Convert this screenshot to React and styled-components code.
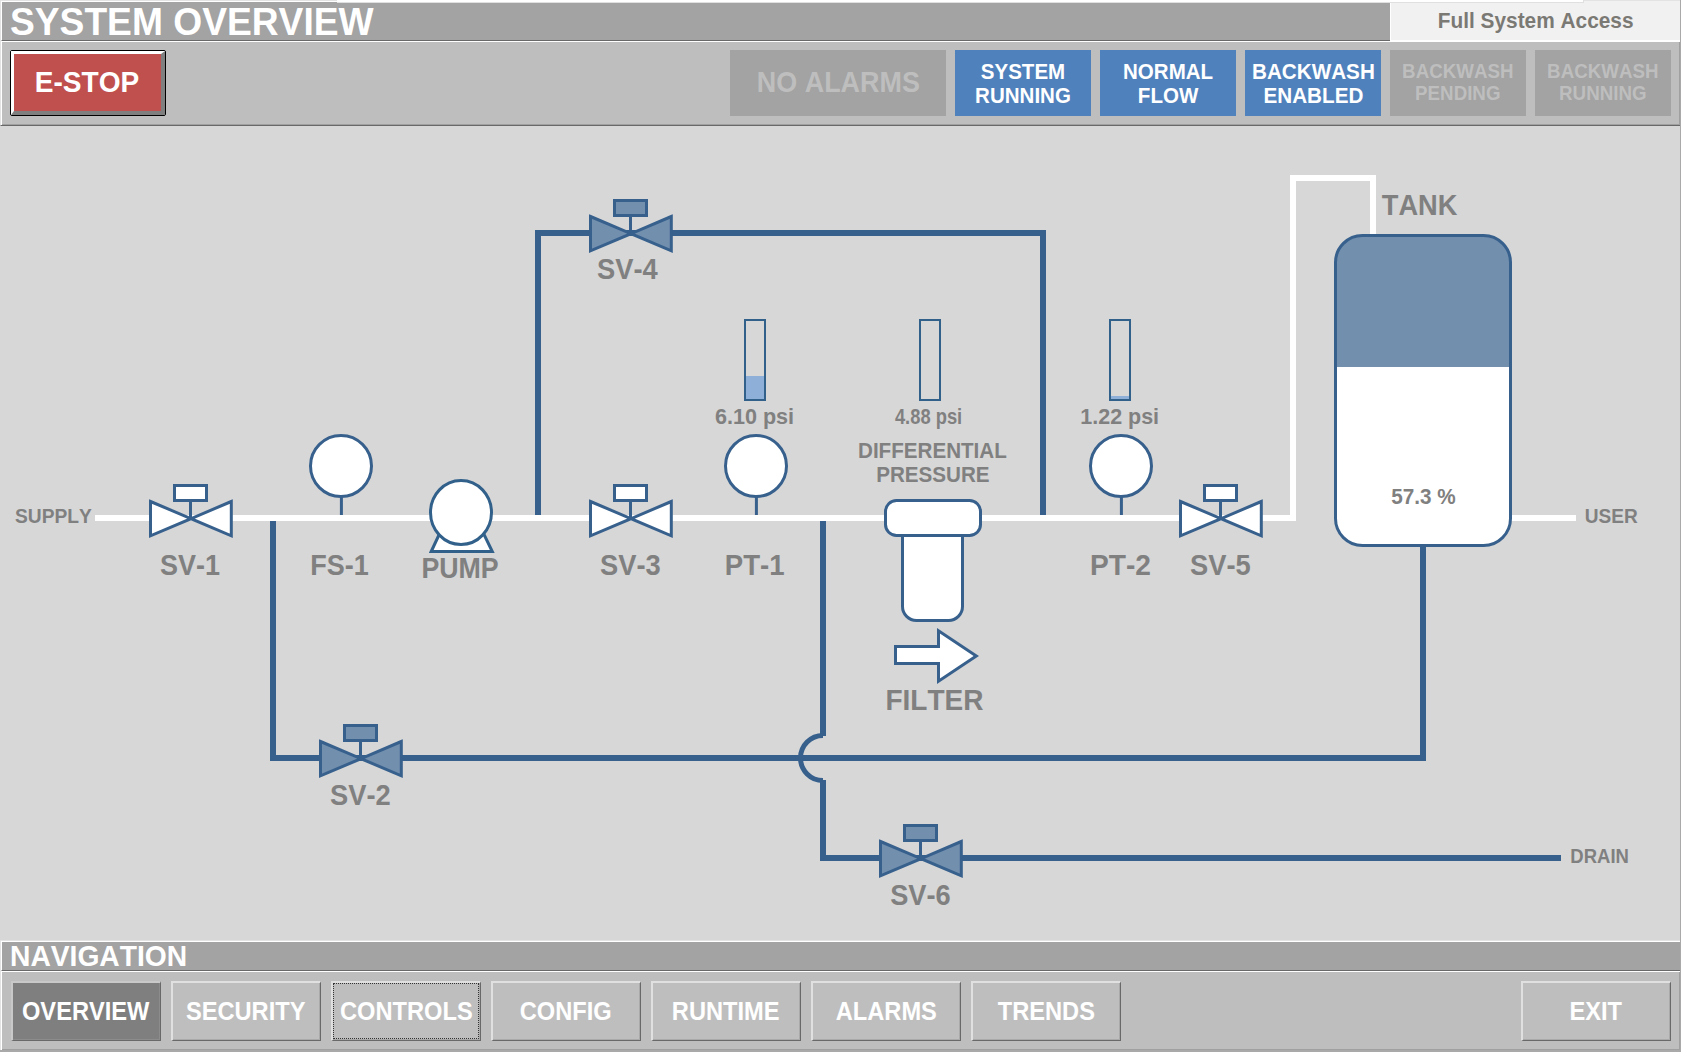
import React from 'react';
import styled, { createGlobalStyle, css } from 'styled-components';

const color = {
  canvas: '#d7d7d7',
  bar: '#bebebe',
  title: '#a3a3a3',
  pipe: '#37608d',
  gauge: '#31608a',
  closed: '#728fae',
  level: '#8eb0d8',
  label: '#808080',
  blue: '#4f81bd',
  red: '#c0504d',
  shadow: '#696969',
  shade: '#a0a0a0',
  light: '#e3e3e3',
};

const GlobalStyle = createGlobalStyle`
  *, *::before, *::after { box-sizing: border-box; }
  body {
    margin: 0;
    background: ${color.canvas};
    font-family: "Liberation Sans", Arial, sans-serif;
    font-weight: bold;
    font-kerning: none;
  }
`;

const Screen = styled.div`
  position: relative;
  display: flex;
  flex-direction: column;
  width: 1681px;
  height: 1052px;
  background: ${color.canvas};
  border-right: 1px solid #a9a9a9;
  border-bottom: 2px solid #a9a9a9;
  overflow: hidden;
`;

/* Slightly taller, narrower lettering used on every bar and button. */
const Caption = styled.span`
  display: inline-block;
  transform: scale(${(p) => p.$narrow || 0.985}, 1.04);
  transform-origin: ${(p) => (p.$start ? 'left' : 'center')} center;
`;

const TitleRow = styled.header`
  display: flex;
  flex: none;
  height: ${(p) => p.$height}px;
  border-left: 1px solid ${color.light};
  border-top: 1px solid ${color.light};
`;

const TitleBar = styled.h1`
  flex: 1;
  margin: 0;
  padding-left: ${(p) => p.$indent}px;
  background: ${color.title};
  border-left: 1px solid #fff;
  border-top: 1px solid #fff;
  border-bottom: 1px solid ${color.shadow};
  color: #fff;
  font-size: ${(p) => p.$size}px;
  line-height: ${(p) => p.$line}px;
  white-space: nowrap;
`;

const AccessLevel = styled.div`
  flex: none;
  width: 290px;
  background: #f1f1f1;
  border: solid #fff;
  border-width: 0 0 1px 1px;
  color: #7b7974;
  font-size: 21px;
  line-height: 39px;
  text-align: center;
`;

const WindowEdge = styled.div`
  position: absolute;
  top: 0;
  left: 337px;
  width: 1247px;
  height: 3px;
  background: #fff;
  border: solid #e0e0e0;
  border-width: 0 1px 1px 0;
`;

const Toolbar = styled.div`
  display: flex;
  flex: none;
  gap: ${(p) => p.$gap}px;
  height: ${(p) => p.$height}px;
  padding: ${(p) => p.$padding};
  background: ${color.bar};
  border-left: 1px solid ${color.light};
  box-shadow: inset 1px 1px 0 #fff, inset -1px -1px 0 ${color.shade};
`;

const StatusToolbar = styled(Toolbar)`
  border-bottom: 1px solid ${color.shadow};
`;

const Spacer = styled.div`
  flex: 1;
`;

const StopButton = styled.button`
  width: 156px;
  height: 66px;
  padding: 0;
  border: 1px solid #000;
  border-radius: 2px;
  background: #000;
`;

const StopFace = styled.span`
  display: block;
  height: 64px;
  background: ${color.red};
  border-style: solid;
  border-width: 3px 4px 4px 3px;
  border-color: #fff #7f7f7f #7f7f7f #fff;
  color: #fff;
  font: bold 28.5px/56px "Liberation Sans", Arial, sans-serif;
  font-kerning: none;
  text-align: center;
`;

const Status = styled.div`
  display: flex;
  align-items: center;
  justify-content: center;
  width: ${(p) => (p.$wide ? 216 : 136)}px;
  height: 66px;
  text-align: center;
  white-space: pre;
  ${(p) =>
    p.$active
      ? css`
          background: ${color.blue};
          color: #fff;
          font-size: 21px;
          line-height: 23px;
        `
      : css`
          background: ${color.title};
          color: #bebebe;
          font-size: ${p.$wide ? 28.2 : 19.8}px;
          line-height: 21.2px;
          padding-bottom: ${p.$wide ? 0 : 2}px;
        `}
`;

const Process = styled.main`
  flex: none;
  height: 814px;
`;

const Diagram = styled.svg`
  display: block;
`;

const Pipe = styled.path`
  fill: none;
  stroke: ${(p) => (p.$flow ? '#fff' : color.pipe)};
  stroke-width: ${(p) => p.$width || 6};
`;

const Shape = styled.g`
  stroke: ${color.pipe};
  stroke-width: 3;
  fill: ${(p) => (p.$closed ? color.closed : '#fff')};
`;

const Tag = styled.text`
  fill: ${color.label};
  font-size: ${(p) => p.$size}px;
`;

const NavButton = styled.button`
  position: relative;
  width: 150px;
  height: 60px;
  padding: 0 1px 0 0;
  background: ${(p) => (p.$current ? '#7f7f7f' : color.bar)};
  border: solid;
  border-width: 2px 1px 1px 2px;
  border-color: ${(p) => (p.$current ? '#c9c9c9' : '#e0e0e0')} ${color.shadow} ${color.shadow}
    ${(p) => (p.$current ? '#c9c9c9' : '#e0e0e0')};
  box-shadow: inset -1px -1px 0 ${(p) => (p.$current ? '#8c8c8c' : '#a9a9a9')};
  color: #fff;
  font: bold 24px/57px "Liberation Sans", Arial, sans-serif;
  font-kerning: none;
  text-align: center;

  ${(p) =>
    p.$focused &&
    css`
      &::after {
        content: '';
        position: absolute;
        inset: 0 1px 1px 0;
        border: 1px dotted #333;
      }
    `}
`;

function Label({ x, y, width, size = 29, children }) {
  return (
    <Tag x={x} y={y} $size={size} textLength={width} lengthAdjust="spacingAndGlyphs">
      {children}
    </Tag>
  );
}

function Valve({ x, y, closed }) {
  return (
    <Shape $closed={closed} transform={`translate(${x} ${y})`}>
      <path d="M-.5 -16V0" />
      <rect x="-16.5" y="-32.5" width="32" height="15" />
      <path d="M-40.5 -16.5L0 .7L-40.5 17.8Z" />
      <path d="M40.3 -16.5L0 .7L40.3 17.8Z" />
    </Shape>
  );
}

function Sensor({ x }) {
  return (
    <Shape transform={`translate(${x} 466)`}>
      <path d="M.4 31V49" />
      <circle r="30.5" />
    </Shape>
  );
}

function Bar({ x, level }) {
  return (
    <g>
      <rect x={x + 1} y="320" width="20" height="80" fill="none" stroke={color.gauge} strokeWidth="2" />
      {level > 0 && <rect x={x + 2} y={399 - level} width="18" height={level} fill={color.level} />}
    </g>
  );
}

function Pump() {
  return (
    <Shape>
      <path d="M431.2 551.5L445 522H478L492.3 551.5Z" stroke={color.gauge} />
      <ellipse cx="461" cy="512.5" rx="30.5" ry="32" stroke={color.gauge} />
    </Shape>
  );
}

function Filter() {
  return (
    <Shape>
      <rect x="902.5" y="520" width="60" height="100.5" rx="14" />
      <rect x="885.5" y="500.5" width="95" height="35" rx="11" />
      <path d="M895.5 646.5H938.5V630.8L976.3 655.9L938.5 681.2V663.5H895.5Z" />
    </Shape>
  );
}

function Tank() {
  return (
    <g>
      <clipPath id="tank-shell">
        <rect x="1335.5" y="235.5" width="175" height="310" rx="27" />
      </clipPath>
      <g clipPath="url(#tank-shell)">
        <rect x="1334" y="234" width="178" height="133" fill={color.closed} />
        <rect x="1334" y="367" width="178" height="180" fill="#fff" />
      </g>
      <rect x="1335.5" y="235.5" width="175" height="310" rx="27" fill="none" stroke={color.pipe} strokeWidth="3" />
    </g>
  );
}

const tags = [
  ['SUPPLY', 15, 523, 76.8, 20.3],
  ['SV-1', 160, 575, 60],
  ['FS-1', 310.2, 575, 58.5],
  ['PUMP', 421.4, 578, 77.3],
  ['SV-3', 600, 575, 60.7],
  ['PT-1', 724.8, 575, 59.8],
  ['PT-2', 1090, 575, 61],
  ['SV-5', 1190, 575, 60.7],
  ['SV-4', 597, 279, 60.7],
  ['SV-2', 330, 805, 60.7],
  ['SV-6', 890.2, 905, 60.5],
  ['FILTER', 885.4, 710, 98],
  ['TANK', 1381.8, 215, 75.6],
  ['USER', 1584.8, 523, 53, 20.3],
  ['DRAIN', 1570.3, 863, 58.6, 20.3],
  ['6.10 psi', 715, 424, 79.1, 21.2],
  ['4.88 psi', 894.9, 424, 67.3, 21.2],
  ['1.22 psi', 1080.3, 424, 78.8, 21.2],
  ['DIFFERENTIAL', 858, 458, 148.8, 21.4],
  ['PRESSURE', 876.2, 482, 113.4, 21.4],
  ['57.3 %', 1391.2, 504, 64.4, 21.2],
];

const statuses = [
  { text: 'NO ALARMS', wide: true, narrow: 0.955 },
  { text: 'SYSTEM\nRUNNING', active: true, narrow: 0.978 },
  { text: 'NORMAL\nFLOW', active: true, narrow: 0.978 },
  { text: 'BACKWASH\nENABLED', active: true, narrow: 0.984 },
  { text: 'BACKWASH\nPENDING', narrow: 0.947 },
  { text: 'BACKWASH\nRUNNING', narrow: 0.947 },
];

const pages = ['OVERVIEW', 'SECURITY', 'CONTROLS', 'CONFIG', 'RUNTIME', 'ALARMS', 'TRENDS'];

export default function App() {
  return (
    <>
      <GlobalStyle />
      <Screen>
        <TitleRow $height={41}>
          <TitleBar $indent={8} $size={37.3} $line={39}>
            <Caption $start $narrow={0.997}>
              SYSTEM OVERVIEW
            </Caption>
          </TitleBar>
          <AccessLevel>
            <Caption $narrow={0.992}>Full System Access</Caption>
          </AccessLevel>
        </TitleRow>
        <WindowEdge />
        <StatusToolbar $gap={9} $height={85} $padding="9px 9px 0 9px">
          <StopButton>
            <StopFace>
              <Caption $narrow={0.985}>E-STOP</Caption>
            </StopFace>
          </StopButton>
          <Spacer />
          {statuses.map((s) => (
            <Status key={s.text} $wide={s.wide} $active={s.active}>
              <Caption $narrow={s.narrow}>{s.text}</Caption>
            </Status>
          ))}
        </StatusToolbar>

        <Process>
          <Diagram width="1680" height="814" viewBox="0 126 1680 814">
            <Pipe d="M273 521V758H1423V546" />
            <Pipe d="M538 515V233H1043V515" />
            <Pipe d="M823 521V736" />
            <Pipe d="M823 735.5A22.5 22.5 0 0 0 823 780.5" $width={5} />
            <Pipe d="M823 780V858H1561" />
            <Sensor x={341} />
            <Sensor x={756} />
            <Sensor x={1121} />
            <Pipe $flow d="M95 518H1293V178H1373V235" />
            <Pipe $flow d="M1511 518H1576" />
            <Valve x={191} y={518} />
            <Valve x={361} y={758} closed />
            <Valve x={631} y={518} />
            <Valve x={631} y={233} closed />
            <Valve x={1221} y={518} />
            <Valve x={921} y={858} closed />
            <Pump />
            <Filter />
            <Tank />
            <Bar x={744} level={23} />
            <Bar x={919} level={0} />
            <Bar x={1109} level={3} />
            {tags.map(([text, x, y, width, size]) => (
              <Label key={text} x={x} y={y} width={width} size={size}>
                {text}
              </Label>
            ))}
          </Diagram>
        </Process>

        <TitleRow $height={31}>
          <TitleBar as="h2" $indent={8} $size={28.4} $line={28}>
            <Caption $start $narrow={0.994}>
              NAVIGATION
            </Caption>
          </TitleBar>
        </TitleRow>
        <Toolbar $gap={10} $height={79} $padding="10px 9px 0 10px">
          {pages.map((name) => (
            <NavButton key={name} $current={name === 'OVERVIEW'} $focused={name === 'CONTROLS'}>
              <Caption>{name}</Caption>
            </NavButton>
          ))}
          <Spacer />
          <NavButton>
            <Caption>EXIT</Caption>
          </NavButton>
        </Toolbar>
      </Screen>
    </>
  );
}
